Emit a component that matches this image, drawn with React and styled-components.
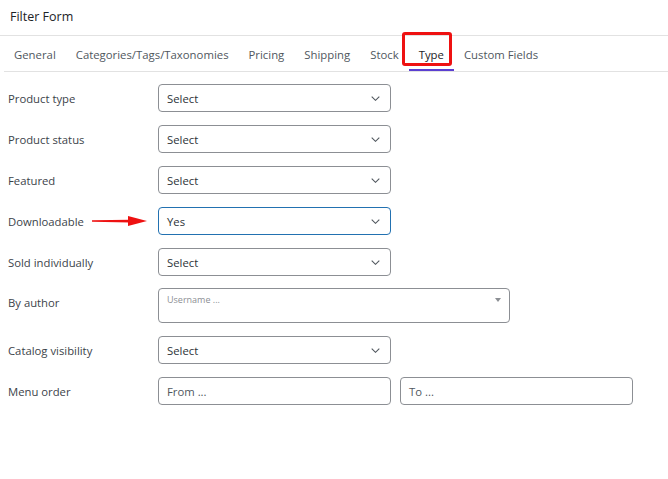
import React from "react";
import styled, { createGlobalStyle } from "styled-components";

const GlobalStyle = createGlobalStyle`
    body {
        margin: 0;
        background: #fff;
        font-family: "Open Sans", "Noto Sans", sans-serif;
        color: #3c434a;
    }
`;

const Page = styled.div`
    width: 668px;
    height: 479px;
    background: #fff;
`;

const Header = styled.div`
    height: 36px;
    display: flex;
    align-items: center;
    padding: 0 0 2px 10px;
    border-bottom: 1px solid #e2e2e2;
    box-sizing: border-box;
    font-size: 12.5px;
    color: #1d2327;
`;

const TabBar = styled.div`
    display: flex;
    height: 36px;
    margin-left: 4px;
    border-bottom: 1px solid #e2e2e2;
    box-sizing: border-box;
`;

const Tab = styled.div`
    position: relative;
    display: flex;
    align-items: center;
    padding: 2px 10px 0;
    font-size: 11.35px;
    font-weight: 500;
    color: ${(p) => (p.$active ? "#1d2327" : "#50575e")};

    &::after {
        content: "";
        position: absolute;
        left: 0;
        right: 0;
        bottom: 0;
        height: 2px;
        background: ${(p) => (p.$active ? "#5b3fd1" : "transparent")};
    }
`;

const Highlight = styled.div`
    position: absolute;
    left: -7px;
    top: -4px;
    width: 50px;
    height: 34px;
    border: 3px solid #ee1111;
    border-radius: 3px;
    box-sizing: border-box;
`;

const Form = styled.div`
    display: grid;
    grid-template-columns: 150px auto;
    row-gap: 13px;
    padding: 12px 0 0 8px;
`;

const Label = styled.div`
    position: relative;
    display: flex;
    align-items: ${(p) => (p.$top ? "flex-start" : "center")};
    padding-top: ${(p) => (p.$top ? "6px" : "0")};
    font-size: 11.3px;
    color: #3c434a;
`;

const Arrow = styled.svg`
    position: absolute;
    left: 84px;
    top: 50%;
    margin-top: -6px;
`;

const Controls = styled.div`
    display: flex;
    gap: 9px;
`;

const SelectBox = styled.div`
    width: 233px;
    height: 28px;
    box-sizing: border-box;
    display: flex;
    align-items: center;
    justify-content: space-between;
    padding: 0 10px 0 8px;
    border: ${(p) => (p.$focus ? "1.5px solid #2271b1" : "1px solid #8c8f94")};
    border-radius: 4px;
    font-size: 11.3px;
    color: #2c3338;
`;

const AuthorBox = styled.div`
    width: 352px;
    height: 35px;
    box-sizing: border-box;
    display: flex;
    justify-content: space-between;
    padding: 4px 8px 0 8px;
    margin-top: -1px;
    border: 1px solid #8c8f94;
    border-radius: 4px;
    font-size: 9px;
    color: #8c8f94;
`;

const TextInput = styled.div`
    width: ${(p) => p.$width || "233px"};
    height: 28px;
    box-sizing: border-box;
    display: flex;
    align-items: center;
    padding: 0 8px;
    border: 1px solid #8c8f94;
    border-radius: 4px;
    font-size: 11.3px;
    color: #50575e;
`;

const Chevron = () => (
    <svg width="9" height="5" viewBox="0 0 9 5">
        <path d="M0.7 0.7 L4.5 4.3 L8.3 0.7" fill="none" stroke="#50575e" strokeWidth="1.1" />
    </svg>
);

const Triangle = () => (
    <svg width="6" height="4" viewBox="0 0 6 4" style={{ marginTop: 5 }}>
        <path d="M0 0 H6 L3 4 Z" fill="#8c8f94" />
    </svg>
);

const tabs = [
    "General",
    "Categories/Tags/Taxonomies",
    "Pricing",
    "Shipping",
    "Stock",
    "Type",
    "Custom Fields",
];

const Select = ({ value = "Select", focus }) => (
    <SelectBox $focus={focus}>
        {value}
        <Chevron />
    </SelectBox>
);

const App = () => {
    return (
        <Page>
            <GlobalStyle />
            <Header>Filter Form</Header>
            <TabBar>
                {tabs.map((t) => (
                    <Tab key={t} $active={t === "Type"}>
                        {t}
                        {t === "Type" && <Highlight />}
                    </Tab>
                ))}
            </TabBar>
            <Form>
                <Label>Product type</Label>
                <Select />

                <Label>Product status</Label>
                <Select />

                <Label>Featured</Label>
                <Select />

                <Label>
                    Downloadable
                    <Arrow width="56" height="12" viewBox="0 0 56 12">
                        <path d="M0 5.2 L38 4.8 L38 7.4 L0 6.8 Z" fill="#ee1111" />
                        <path d="M36 1 L55 6 L36 11 Z" fill="#ee1111" />
                    </Arrow>
                </Label>
                <Select value="Yes" focus />

                <Label>Sold individually</Label>
                <Select />

                <Label $top>By author</Label>
                <AuthorBox>
                    Username ...
                    <Triangle />
                </AuthorBox>

                <Label>Catalog visibility</Label>
                <Select />

                <Label>Menu order</Label>
                <Controls>
                    <TextInput>From ...</TextInput>
                    <TextInput>To ...</TextInput>
                </Controls>
            </Form>
        </Page>
    );
};

export default App;
